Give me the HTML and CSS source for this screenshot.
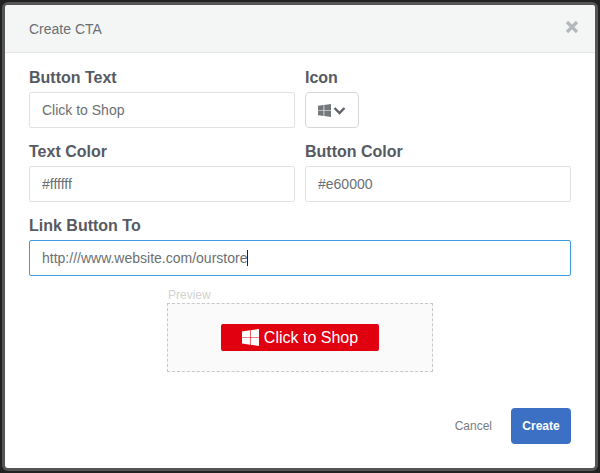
FILE: index.html
```html
<!DOCTYPE html>
<html>

<head>
    <meta charset="UTF-8">
    <title>Create CTA</title>
    <link rel="stylesheet" href="styles.css">
</head>

<body>

    <div class="modal">
        <div class="modal-head">
            <span class="modal-title">Create CTA</span>
            <svg class="close" width="14" height="14" viewBox="0 0 14 14">
                <path d="M2 2L12 12M12 2L2 12" stroke="#b4b8ba" stroke-width="3.2" fill="none"/>
            </svg>
        </div>
        <div class="modal-body">
            <div class="row">
                <div class="field">
                    <label>Button Text</label>
                    <input class="input" type="text" value="Click to Shop">
                </div>
                <div class="field">
                    <label>Icon</label>
                    <button class="icon-btn">
                        <svg width="13" height="13" viewBox="0 0 16 16">
                            <path d="M0 2.3L6.9 1.3V7.6H0ZM7.7 1.2L16 0V7.6H7.7ZM0 8.4H6.9V14.7L0 13.7ZM7.7 8.4H16V16L7.7 14.8Z" fill="#75797d"/>
                        </svg>
                        <svg width="13" height="9" viewBox="0 0 13 9">
                            <path d="M1.5 2L6.5 7L11.5 2" stroke="#5f6368" stroke-width="2.4" fill="none"/>
                        </svg>
                    </button>
                </div>
            </div>
            <div class="row">
                <div class="field">
                    <label>Text Color</label>
                    <input class="input" type="text" value="#ffffff">
                </div>
                <div class="field">
                    <label>Button Color</label>
                    <input class="input" type="text" value="#e60000">
                </div>
            </div>
            <div class="field field-link">
                <label>Link Button To</label>
                <div class="input input-focus">http:///www.website.com/ourstore<span class="caret"></span></div>
            </div>
            <div class="preview-wrap">
                <div class="preview-label">Preview</div>
                <div class="preview">
                    <div class="cta">
                        <svg width="17" height="17" viewBox="0 0 16 16">
                            <path d="M0 2.3L7.5 1.2V7.7H0ZM8.1 1.1L16 0V7.7H8.1ZM0 8.3H7.5V14.8L0 13.7ZM8.1 8.3H16V16L8.1 14.9Z" fill="#fff"/>
                        </svg>
                        Click to Shop
                    </div>
                </div>
            </div>
            <div class="actions">
                <span class="cancel">Cancel</span>
                <button class="create">Create</button>
            </div>
        </div>
    </div>

</body>
</html>
```

FILE: styles.css
```css
*{
    margin: 0px;
    padding: 0px;
    box-sizing: border-box;
    font-family: "Liberation Sans", Arial, sans-serif;
}
html, body{
    height: 100%;
}
body{
    background-color: #222;
    padding: 5px;
}
.modal{
    height: 463px;
    background-color: #fff;
    border-radius: 3px;
    box-shadow: 0px 0px 0px 3px #555;
    overflow: hidden;
}
.modal-head{
    height: 48px;
    padding: 0px 16px 0px 24px;
    background-color: #f4f6f6;
    border-bottom: 1px solid #e3e5e5;
    display: flex;
    align-items: center;
    justify-content: space-between;
}
.modal-title{
    font-size: 14px;
    color: #6b6f73;
}
.close{
    margin-top: -3px;
}
.modal-body{
    padding: 16px 24px 0px 24px;
}
.row{
    display: flex;
    gap: 10px;
}
.field{
    flex: 1;
    margin-bottom: 15px;
}
.field-link{
    margin-bottom: 13px;
}
.field label{
    display: block;
    font-size: 16px;
    font-weight: bold;
    line-height: 18px;
    color: #565a63;
    margin-bottom: 5px;
}
.input{
    display: block;
    width: 100%;
    height: 36px;
    padding: 0px 12px;
    font-size: 14px;
    line-height: 34px;
    color: #6b6f73;
    background-color: #fff;
    border: 1px solid #e0e2e2;
    border-radius: 2px;
    outline: none;
}
.input-focus{
    border-color: #3d9be0;
}
.caret{
    display: inline-block;
    width: 1px;
    height: 16px;
    background-color: #222;
    vertical-align: -3px;
}
.icon-btn{
    width: 54px;
    height: 36px;
    background-color: #fff;
    border: 1px solid #d6d8d8;
    border-radius: 4px;
    display: flex;
    align-items: center;
    justify-content: center;
    gap: 2px;
}
.preview-wrap{
    width: 266px;
    margin: 0px auto;
}
.preview-label{
    font-size: 12px;
    line-height: 12px;
    color: #d2d2d2;
    margin-left: 1px;
    margin-bottom: 2px;
}
.preview{
    height: 69px;
    background-color: #fafafa;
    border: 1px dashed #c8c8c8;
    display: flex;
    align-items: center;
    justify-content: center;
}
.cta{
    width: 158px;
    height: 27px;
    background-color: #e0000f;
    color: #fff;
    font-size: 16px;
    border-radius: 2px;
    display: flex;
    align-items: center;
    justify-content: center;
    gap: 5px;
}
.actions{
    display: flex;
    justify-content: flex-end;
    align-items: center;
    gap: 19px;
    margin-top: 36px;
}
.cancel{
    font-size: 12px;
    color: #7a7d80;
}
.create{
    width: 60px;
    height: 36px;
    background-color: #3b70c4;
    color: #fff;
    font-size: 12px;
    font-weight: bold;
    border: none;
    border-radius: 4px;
}
```
